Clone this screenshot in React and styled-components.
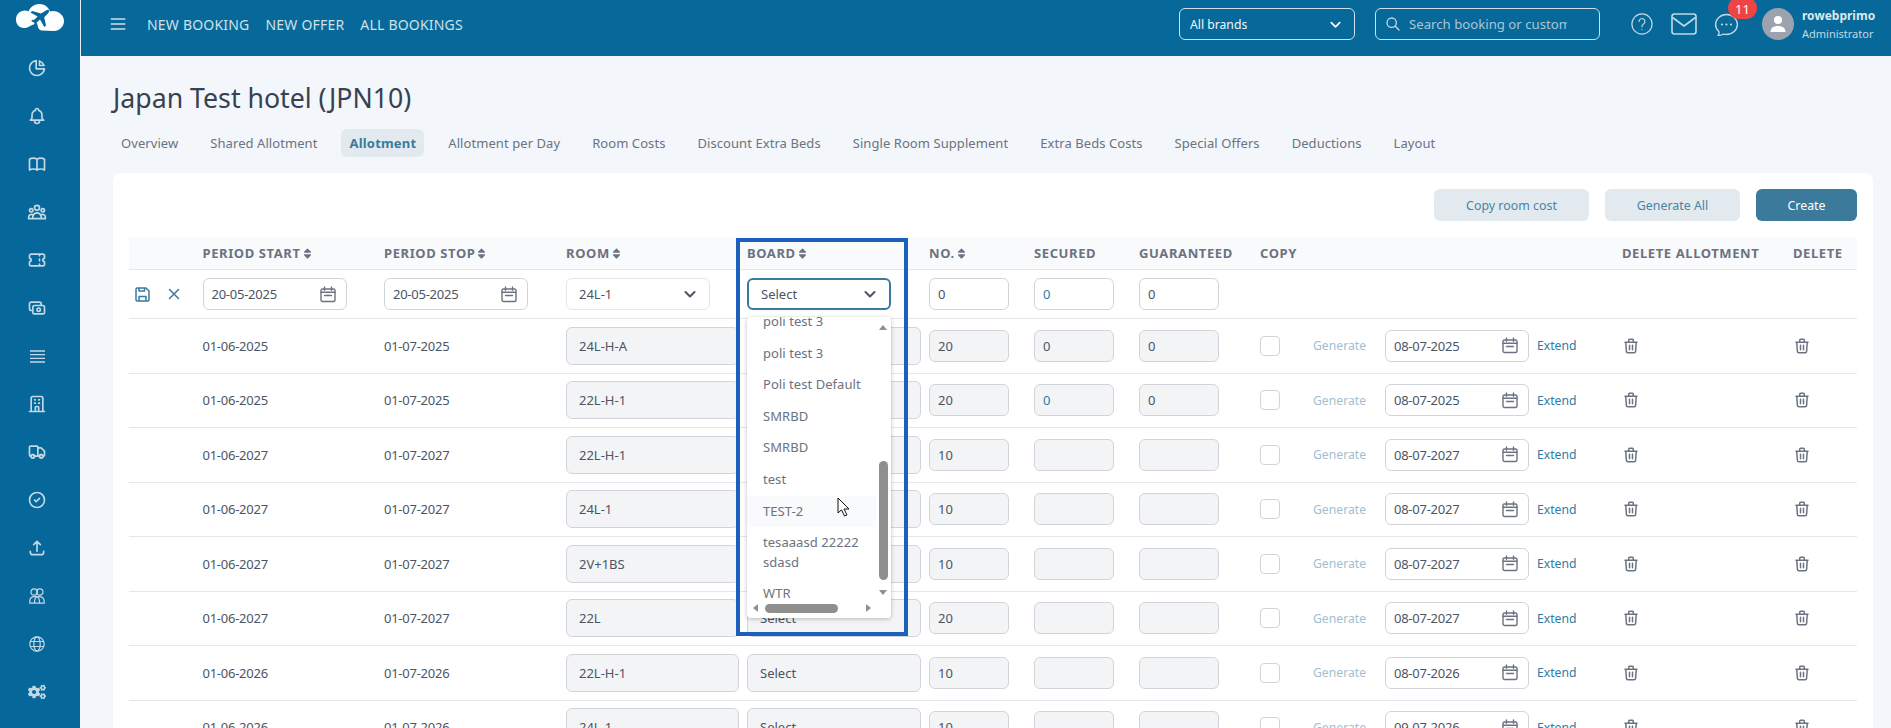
import React from 'react';
import styled, { createGlobalStyle } from 'styled-components';
import { FaSort, FaCogs } from 'react-icons/fa';
import {
  HiOutlineChartPie, HiOutlineBell, HiOutlineBookOpen, HiOutlineUserGroup, HiOutlineTicket,
  HiOutlineCash, HiOutlineOfficeBuilding, HiOutlineTruck, HiOutlineCheckCircle, HiOutlineUpload,
  HiOutlineTrash, HiOutlineSearch, HiOutlineX, HiOutlineMenu,
} from 'react-icons/hi';
import { HiOutlineChatBubbleOvalLeftEllipsis } from 'react-icons/hi2';

const GlobalStyle = createGlobalStyle`
  html, body { margin: 0; padding: 0; height: 100%; overflow: hidden; }
  body { font-family: "Noto Sans", "Open Sans", sans-serif; font-size: 13px; color: #4b5563; background: #f3f7fb; }
  * { box-sizing: border-box; }
`;

const COLUMNS = '73.5px 181.5px 182px 181px 182px 105px 105px 121px 53px 72px 237px 171px 63px';

const Shell = styled.div`
  display: flex;
  height: 728px;
  overflow: hidden;
`;
const Sidebar = styled.aside`
  flex: 0 0 80px;
  background: #05679a;
  display: flex;
  flex-direction: column;
  align-items: center;
  padding-top: 4px;
  padding-right: 6px;
`;
const LogoBox = styled.div`
  height: 40px;
  display: flex;
  margin-left: 6px;
`;
const SideItem = styled.div`
  height: 48px;
  flex: 0 0 48px;
  display: flex;
  align-items: center;
  justify-content: center;
  color: #c3d8e4;
  font-size: 20px;
`;
const CogsItem = styled(SideItem)`
  font-size: 18px;
`;
const Main = styled.div`
  flex: 1;
  min-width: 0;
  display: flex;
  flex-direction: column;
`;
const Header = styled.header`
  height: 56px;
  flex: 0 0 56px;
  background: #066999;
  border-left: 1px solid #e8eef3;
  display: flex;
  align-items: center;
  padding: 0 14px 8px 27px;
  color: #cfe0ea;
`;
const NavLinks = styled.nav`
  display: flex;
  gap: 16px;
  margin-left: 19px;
  font-size: 14px;
  letter-spacing: 0.2px;
  margin-right: auto;
`;
const BrandSelect = styled.div`
  width: 176px;
  height: 32px;
  border: 1px solid #cfe0ea;
  border-radius: 6px;
  display: flex;
  align-items: center;
  justify-content: space-between;
  padding: 0 12px 0 10px;
  color: #f1f6f9;
  font-size: 12.2px;
`;
const SearchBox = styled.div`
  width: 225px;
  height: 32px;
  margin-left: 20px;
  border: 1px solid #cfe0ea;
  border-radius: 6px;
  display: flex;
  align-items: center;
  gap: 8px;
  padding: 0 9px;
  color: #a9c6d7;
  font-size: 13.2px;
  white-space: nowrap;
  overflow: hidden;
  svg { flex: none; font-size: 16px; color: #c3d8e4; }
`;
const SearchText = styled.span`
  overflow: hidden;
  width: 158px;
`;
const HeaderIcons = styled.div`
  display: flex;
  align-items: center;
  margin-left: 31px;
  width: 131px;
  color: #c3d8e4;
`;
const HelpIcon = styled.svg`
  width: 22px;
  height: 22px;
  margin-right: 18px;
`;
const MailIcon = styled.svg`
  width: 26px;
  height: 22px;
  margin-right: 15px;
`;
const ChatWrap = styled.div`
  position: relative;
  font-size: 29px;
  line-height: 0;
`;
const Badge = styled.span`
  position: absolute;
  left: 16px;
  top: -13px;
  width: 29px;
  height: 22px;
  border-radius: 11px;
  background: #ef4444;
  color: #fff;
  font-size: 13px;
  line-height: 25px;
  text-align: center;
`;
const Avatar = styled.div`
  width: 32px;
  height: 32px;
  flex: none;
  border-radius: 50%;
  background: #9ca3af;
  display: flex;
  align-items: center;
  justify-content: center;
`;
const UserInfo = styled.div`
  width: 75px;
  margin-left: 8px;
  display: flex;
  flex-direction: column;
  gap: 3px;
  line-height: 15px;
  white-space: nowrap;
`;
const UserName = styled.span`
  font-size: 12px;
  font-weight: 700;
  color: #dbe7ee;
`;
const UserRole = styled.span`
  font-size: 11px;
  color: #c3d8e4;
`;
const Content = styled.main`
  flex: 1;
  padding: 24px 18px 0 33px;
`;
const Title = styled.h1`
  margin: 0;
  font-size: 26.7px;
  font-weight: 400;
  line-height: 36px;
  color: #374151;
`;
const Tabs = styled.div`
  display: flex;
  gap: 16px;
  margin-top: 13px;
  height: 28px;
  margin-bottom: 16px;
`;
const Tab = styled.div`
  padding: 0 8px;
  border-radius: 6px;
  line-height: 28px;
  font-size: 13px;
  letter-spacing: ${p => (p.$active ? '0.2px' : '0.07px')};
  white-space: nowrap;
  color: ${p => (p.$active ? '#3b7a9b' : '#6b7280')};
  background: ${p => (p.$active ? '#e2eaf0' : 'transparent')};
  font-weight: ${p => (p.$active ? 700 : 400)};
`;
const Card = styled.section`
  background: #fff;
  border-radius: 8px 8px 0 0;
  padding: 16px 16px 0;
  height: 560px;
  overflow: hidden;
`;
const Actions = styled.div`
  display: flex;
  justify-content: flex-end;
  gap: 16px;
  margin-bottom: 16px;
`;
const ActionButton = styled.button`
  width: ${p => p.$w}px;
  height: 32px;
  border: 0;
  border-radius: 6px;
  font: inherit;
  font-size: 12.4px;
  color: ${p => (p.$primary ? '#fff' : '#4a84a3')};
  background: ${p => (p.$primary ? '#3b7a9b' : '#e2eaf0')};
`;
const Table = styled.div`
  position: relative;
`;
const HeadRow = styled.div`
  display: grid;
  grid-template-columns: ${COLUMNS};
  height: 33px;
  align-items: center;
  background: #f9fafb;
  border-bottom: 1px solid #e5e7eb;
`;
const HeadCell = styled.div`
  display: flex;
  align-items: center;
  font-size: 13px;
  font-weight: 700;
  letter-spacing: 0.6px;
  white-space: nowrap;
  color: #6b7280;
  svg { font-size: 13px; }
`;
const Row = styled.div`
  display: grid;
  grid-template-columns: ${COLUMNS};
  height: ${p => (p.$edit ? '49px' : '54.5px')};
  align-items: center;
  border-bottom: 1px solid #e5e7eb;
`;
const Cell = styled.div`
  display: flex;
  align-items: center;
  min-width: 0;
`;
const DateText = styled.span`
  letter-spacing: -0.25px;
`;
const EditIcons = styled(Cell)`
  color: #3b7a9b;
  gap: 14.5px;
  padding-left: 6px;
`;
const Field = styled.div`
  width: ${p => p.$w || 144}px;
  height: 32px;
  flex: none;
  display: flex;
  align-items: center;
  justify-content: space-between;
  padding: 0 10px 0 8px;
  background: #fff;
  border: 1px solid #d1d5db;
  border-radius: 6px;
  font-size: 13px;
  color: ${p => p.$color || '#4b5563'};
`;
const SelectField = styled(Field)`
  padding: 0 12px;
  border: ${p => (p.$focus ? '2px solid #3b7a9b' : '1px solid #e5e7eb')};
`;
const DisabledField = styled.div`
  width: ${p => p.$w || 80}px;
  height: ${p => (p.$tall ? 38 : 32)}px;
  display: flex;
  align-items: center;
  padding: 0 ${p => (p.$tall ? 12 : 8)}px;
  background: #f3f4f6;
  border: 1px solid #d1d5db;
  border-radius: 6px;
  font-size: 13px;
  color: ${p => p.$color || '#4b5563'};
`;
const CheckBox = styled.span`
  width: 20px;
  height: 20px;
  border: 1px solid #d1d5db;
  border-radius: 4px;
  background: #fff;
  display: block;
`;
const GenerateLink = styled.span`
  color: #9fbfd0;
  font-size: 12.2px;
`;
const ExtendLink = styled.span`
  color: #2f7ba3;
  font-size: 12.2px;
  margin-left: 8px;
`;
const Trash = styled(HiOutlineTrash)`
  font-size: 18px;
  color: #6b7280;
`;
const Highlight = styled.div`
  position: absolute;
  left: 607px;
  top: 1px;
  width: 172px;
  height: 398px;
  border: 4px solid #1c60bc;
  pointer-events: none;
`;
const Dropdown = styled.div`
  position: absolute;
  left: 618px;
  top: 80px;
  width: 144px;
  height: 301px;
  background: #fff;
  border-radius: 4px;
  box-shadow: 0 1px 4px rgba(0, 0, 0, 0.25);
  overflow: hidden;
`;
const OptionList = styled.div`
  margin-top: -11px;
  width: 129px;
`;
const Option = styled.div`
  padding: 6px 8px 6px 16px;
  min-height: 31.6px;
  line-height: 19.6px;
  font-size: 13px;
  letter-spacing: 0.05px;
  color: #6b7280;
  background: ${p => (p.$hover ? '#f9fafb' : 'transparent')};
`;
const HorizontalTrack = styled.div`
  position: absolute;
  left: 0;
  bottom: 0;
  width: 100%;
  height: 17px;
  background: #fff;
`;
const ThumbH = styled.div`
  position: absolute;
  left: 18px;
  top: 3px;
  width: 73px;
  height: 9px;
  border-radius: 5px;
  background: #8f8f8f;
`;
const ThumbV = styled.div`
  position: absolute;
  left: 132px;
  top: 144px;
  width: 9px;
  height: 119px;
  border-radius: 5px;
  background: #8f8f8f;
`;
const Arrow = styled.span`
  position: absolute;
  left: ${p => p.$x}px;
  top: ${p => p.$y}px;
  width: 0;
  height: 0;
  border-style: solid;
  border-color: transparent;
  ${p => p.$dir === 'up' && 'border-width: 0 4.5px 5px; border-bottom-color: #8f8f8f;'}
  ${p => p.$dir === 'down' && 'border-width: 5px 4.5px 0; border-top-color: #8f8f8f;'}
  ${p => p.$dir === 'left' && 'border-width: 4.5px 5px 4.5px 0; border-right-color: #8f8f8f;'}
  ${p => p.$dir === 'right' && 'border-width: 4.5px 0 4.5px 5px; border-left-color: #8f8f8f;'}
`;
const Pointer = styled.svg`
  position: absolute;
  left: 90px;
  top: 180px;
  width: 13px;
  height: 20px;
`;

const Chevron = ({ color = 'currentColor', size = 14 }) => (
  <svg width={size} height={size} viewBox="0 0 14 14" fill="none" stroke={color} strokeWidth="2" strokeLinecap="round" strokeLinejoin="round">
    <path d="M2.5 5l4.5 4.5L11.5 5" />
  </svg>
);

const CalendarIcon = () => (
  <svg width="16" height="17" viewBox="0 0 16 17" fill="none" stroke="#6b7280" strokeWidth="1.4" strokeLinecap="round">
    <rect x="1" y="3" width="14" height="12.5" rx="1.5" />
    <path d="M4.5 1v3.2M11.5 1v3.2M1 6.2h14M4.5 9.5h7" />
  </svg>
);

const SaveIcon = () => (
  <svg width="15" height="15" viewBox="0 0 15 15" fill="none" stroke="#3b7a9b" strokeWidth="1.5" strokeLinejoin="round">
    <path d="M1 2.2A1.2 1.2 0 0 1 2.200 1H11l3 3v8.800a1.200 1.200 0 0 1-1.200 1.200H2.200A1.200 1.200 0 0 1 1 12.800z" />
    <path d="M4 14V9.500h7V14M4 1v3h5.500V1" />
  </svg>
);

const CloudLogo = () => (
  <svg width="48" height="28" viewBox="0 0 48 28">
    <path fill="#fff" d="M8 24C3 24 0 20 0 15.500 0 10 4 6.500 9 6.500c1 0 2.500.3 3.500.8C14.500 3 18.500 0 23.500 0 28.500 0 32.500 3 34 7.500c.8-.2 2-.5 3-.5 6 0 11 4.500 11 10 0 5.500-4.500 10-10 10l-12-.5c-2 0-3.500-1.500-4-3.500l-1-4-7 3c-2 1.500-4 2-6 2z" />
    <path fill="#05679a" d="M31 6c1.200-.5 2.200 0 2 1.500-.2 1-1 2-2 3l-2.800 2.700L30 21.500 28.300 23 24 15.500l-3.500 3.300.2 1.700-1.200 1-1.500-3-2.800-1.500 1.100-1.200 1.700.2 3.600-3.500-7.100-4L16.200 7l8.600 2.500z" />
  </svg>
);

const PeopleIcon = () => (
  <svg width="16" height="16" viewBox="0 0 16 16" fill="none" stroke="currentColor" strokeWidth="1.200">
    <circle cx="5.200" cy="4" r="3.200" />
    <circle cx="10.800" cy="4" r="3.200" />
    <path d="M.8 15.200v-1.700c0-3 2-4.800 4.700-4.800h5c2.700 0 4.700 1.800 4.700 4.800v1.700zM8 8.700c-2 .8-2.600 3-2.600 6.500M8 8.700c2 .8 2.600 3 2.600 6.500" />
  </svg>
);

const StackIcon = () => (
  <svg width="15" height="13" viewBox="0 0 15 13" fill="none" stroke="currentColor" strokeWidth="1.300">
    <path d="M0 1h15M0 4.700h15M0 8.300h15M0 12h15" />
  </svg>
);

const GlobeIcon = () => (
  <svg width="16" height="16" viewBox="0 0 16 16" fill="none" stroke="currentColor" strokeWidth="1.200">
    <circle cx="8" cy="8" r="7.200" />
    <ellipse cx="8" cy="8" rx="3.200" ry="7.200" />
    <path d="M1.300 5.500h13.400M1.300 10.500h13.400" />
  </svg>
);

const sideItems = [
  <HiOutlineChartPie />, <HiOutlineBell />, <HiOutlineBookOpen />, <HiOutlineUserGroup />,
  <HiOutlineTicket />, <HiOutlineCash />, <StackIcon />, <HiOutlineOfficeBuilding />,
  <HiOutlineTruck />, <HiOutlineCheckCircle />, <HiOutlineUpload />, <PeopleIcon />,
  <GlobeIcon />,
];

const tabs = ['Overview', 'Shared Allotment', 'Allotment', 'Allotment per Day', 'Room Costs', 'Discount Extra Beds',
  'Single Room Supplement', 'Extra Beds Costs', 'Special Offers', 'Deductions', 'Layout'];

const rows = [
  { start: '01-06-2025', stop: '01-07-2025', room: '24L-H-A', no: 20, secured: '0', guaranteed: '0', until: '08-07-2025' },
  { start: '01-06-2025', stop: '01-07-2025', room: '22L-H-1', no: 20, secured: '0', securedColor: '#2f7ba3', guaranteed: '0', until: '08-07-2025' },
  { start: '01-06-2027', stop: '01-07-2027', room: '22L-H-1', no: 10, until: '08-07-2027' },
  { start: '01-06-2027', stop: '01-07-2027', room: '24L-1', no: 10, until: '08-07-2027' },
  { start: '01-06-2027', stop: '01-07-2027', room: '2V+1BS', no: 10, until: '08-07-2027' },
  { start: '01-06-2027', stop: '01-07-2027', room: '22L', no: 20, until: '08-07-2027' },
  { start: '01-06-2026', stop: '01-07-2026', room: '22L-H-1', no: 10, until: '08-07-2026' },
  { start: '01-06-2026', stop: '01-07-2026', room: '24L-1', no: 10, until: '09-07-2026' },
];

const options = ['poli test 3', 'poli test 3', 'Poli test Default', 'SMRBD', 'SMRBD', 'test', 'TEST-2', 'tesaaasd 22222 sdasd', 'WTR'];

const heads = ['', 'PERIOD START', 'PERIOD STOP', 'ROOM', 'BOARD', 'NO.'];

export default function App() {
  return (
    <Shell>
      <GlobalStyle />
      <Sidebar>
        <LogoBox><CloudLogo /></LogoBox>
        {sideItems.map((icon, i) => <SideItem key={i}>{icon}</SideItem>)}
        <CogsItem><FaCogs /></CogsItem>
      </Sidebar>
      <Main>
        <Header>
          <HiOutlineMenu size={20} />
          <NavLinks>
            <span>NEW BOOKING</span>
            <span>NEW OFFER</span>
            <span>ALL BOOKINGS</span>
          </NavLinks>
          <BrandSelect>All brands <Chevron size={13} /></BrandSelect>
          <SearchBox>
            <HiOutlineSearch />
            <SearchText>Search booking or customer</SearchText>
          </SearchBox>
          <HeaderIcons>
            <HelpIcon viewBox="0 0 24 24" fill="none" stroke="currentColor" strokeWidth="1.300" strokeLinecap="round">
              <circle cx="12" cy="12" r="11" />
              <path d="M8.800 9.200a3.200 3.200 0 1 1 4.800 2.800c-1 .6-1.600 1.300-1.600 2.500v.5M12 18.200v.1" />
            </HelpIcon>
            <MailIcon viewBox="0 0 26 22" fill="none" stroke="currentColor" strokeWidth="1.600" strokeLinejoin="round">
              <rect x="1" y="1" width="24" height="20" rx="2.500" />
              <path d="M1.500 4.500L13 13l11.500-8.500" />
            </MailIcon>
            <ChatWrap>
              <HiOutlineChatBubbleOvalLeftEllipsis style={{ strokeWidth: 1.1 }} />
              <Badge>11</Badge>
            </ChatWrap>
          </HeaderIcons>
          <Avatar>
            <svg width="18" height="18" viewBox="0 0 18 18" fill="#fff">
              <circle cx="9" cy="5" r="4" />
              <path d="M1.500 17c0-4 3-6 7.500-6s7.500 2 7.500 6z" />
            </svg>
          </Avatar>
          <UserInfo>
            <UserName>rowebprimo</UserName>
            <UserRole>Administrator</UserRole>
          </UserInfo>
        </Header>
        <Content>
          <Title>Japan Test hotel (JPN10)</Title>
          <Tabs>
            {tabs.map(t => <Tab key={t} $active={t === 'Allotment'}>{t}</Tab>)}
          </Tabs>
          <Card>
            <Actions>
              <ActionButton $w={155}>Copy room cost</ActionButton>
              <ActionButton $w={135}>Generate All</ActionButton>
              <ActionButton $w={101} $primary>Create</ActionButton>
            </Actions>
            <Table>
              <HeadRow>
                {heads.map((h, i) => (
                  <HeadCell key={i}>{h}{h && <FaSort />}</HeadCell>
                ))}
                <HeadCell>SECURED</HeadCell>
                <HeadCell>GUARANTEED</HeadCell>
                <HeadCell>COPY</HeadCell>
                <HeadCell />
                <HeadCell />
                <HeadCell>DELETE ALLOTMENT</HeadCell>
                <HeadCell>DELETE</HeadCell>
              </HeadRow>
              <Row $edit>
                <EditIcons><SaveIcon /><HiOutlineX size={18} /></EditIcons>
                <Cell><Field><DateText>20-05-2025</DateText> <CalendarIcon /></Field></Cell>
                <Cell><Field><DateText>20-05-2025</DateText> <CalendarIcon /></Field></Cell>
                <Cell><SelectField>24L-1 <Chevron color="#4b5563" /></SelectField></Cell>
                <Cell><SelectField $focus>Select <Chevron color="#4b5563" /></SelectField></Cell>
                <Cell><Field $w={80}>0</Field></Cell>
                <Cell><Field $w={80} $color="#2f7ba3">0</Field></Cell>
                <Cell><Field $w={80}>0</Field></Cell>
              </Row>
              {rows.map((r, i) => (
                <Row key={i}>
                  <Cell />
                  <Cell><DateText>{r.start}</DateText></Cell>
                  <Cell><DateText>{r.stop}</DateText></Cell>
                  <Cell><DisabledField $tall $w={173}>{r.room}</DisabledField></Cell>
                  <Cell><DisabledField $tall $w={174}>Select</DisabledField></Cell>
                  <Cell><DisabledField>{r.no}</DisabledField></Cell>
                  <Cell><DisabledField $color={r.securedColor}>{r.secured}</DisabledField></Cell>
                  <Cell><DisabledField>{r.guaranteed}</DisabledField></Cell>
                  <Cell><CheckBox /></Cell>
                  <Cell><GenerateLink>Generate</GenerateLink></Cell>
                  <Cell>
                    <Field><DateText>{r.until}</DateText> <CalendarIcon /></Field>
                    <ExtendLink>Extend</ExtendLink>
                  </Cell>
                  <Cell><Trash /></Cell>
                  <Cell><Trash /></Cell>
                </Row>
              ))}
              <Dropdown>
                <OptionList>
                  {options.map((o, i) => <Option key={i} $hover={o === 'TEST-2'}>{o}</Option>)}
                </OptionList>
                <Arrow $dir="up" $x={132} $y={8} />
                <ThumbV />
                <Arrow $dir="down" $x={132} $y={273} />
                <HorizontalTrack>
                  <Arrow $dir="left" $x={6} $y={3} />
                  <ThumbH />
                  <Arrow $dir="right" $x={119} $y={3} />
                </HorizontalTrack>
                <Pointer viewBox="0 0 13 20">
                  <path d="M1 1v15l3.500-3.200L7.500 19l2.500-1-3-6h5z" fill="#fff" stroke="#111" strokeWidth="1" strokeLinejoin="round" />
                </Pointer>
              </Dropdown>
              <Highlight />
            </Table>
          </Card>
        </Content>
      </Main>
    </Shell>
  );
}
